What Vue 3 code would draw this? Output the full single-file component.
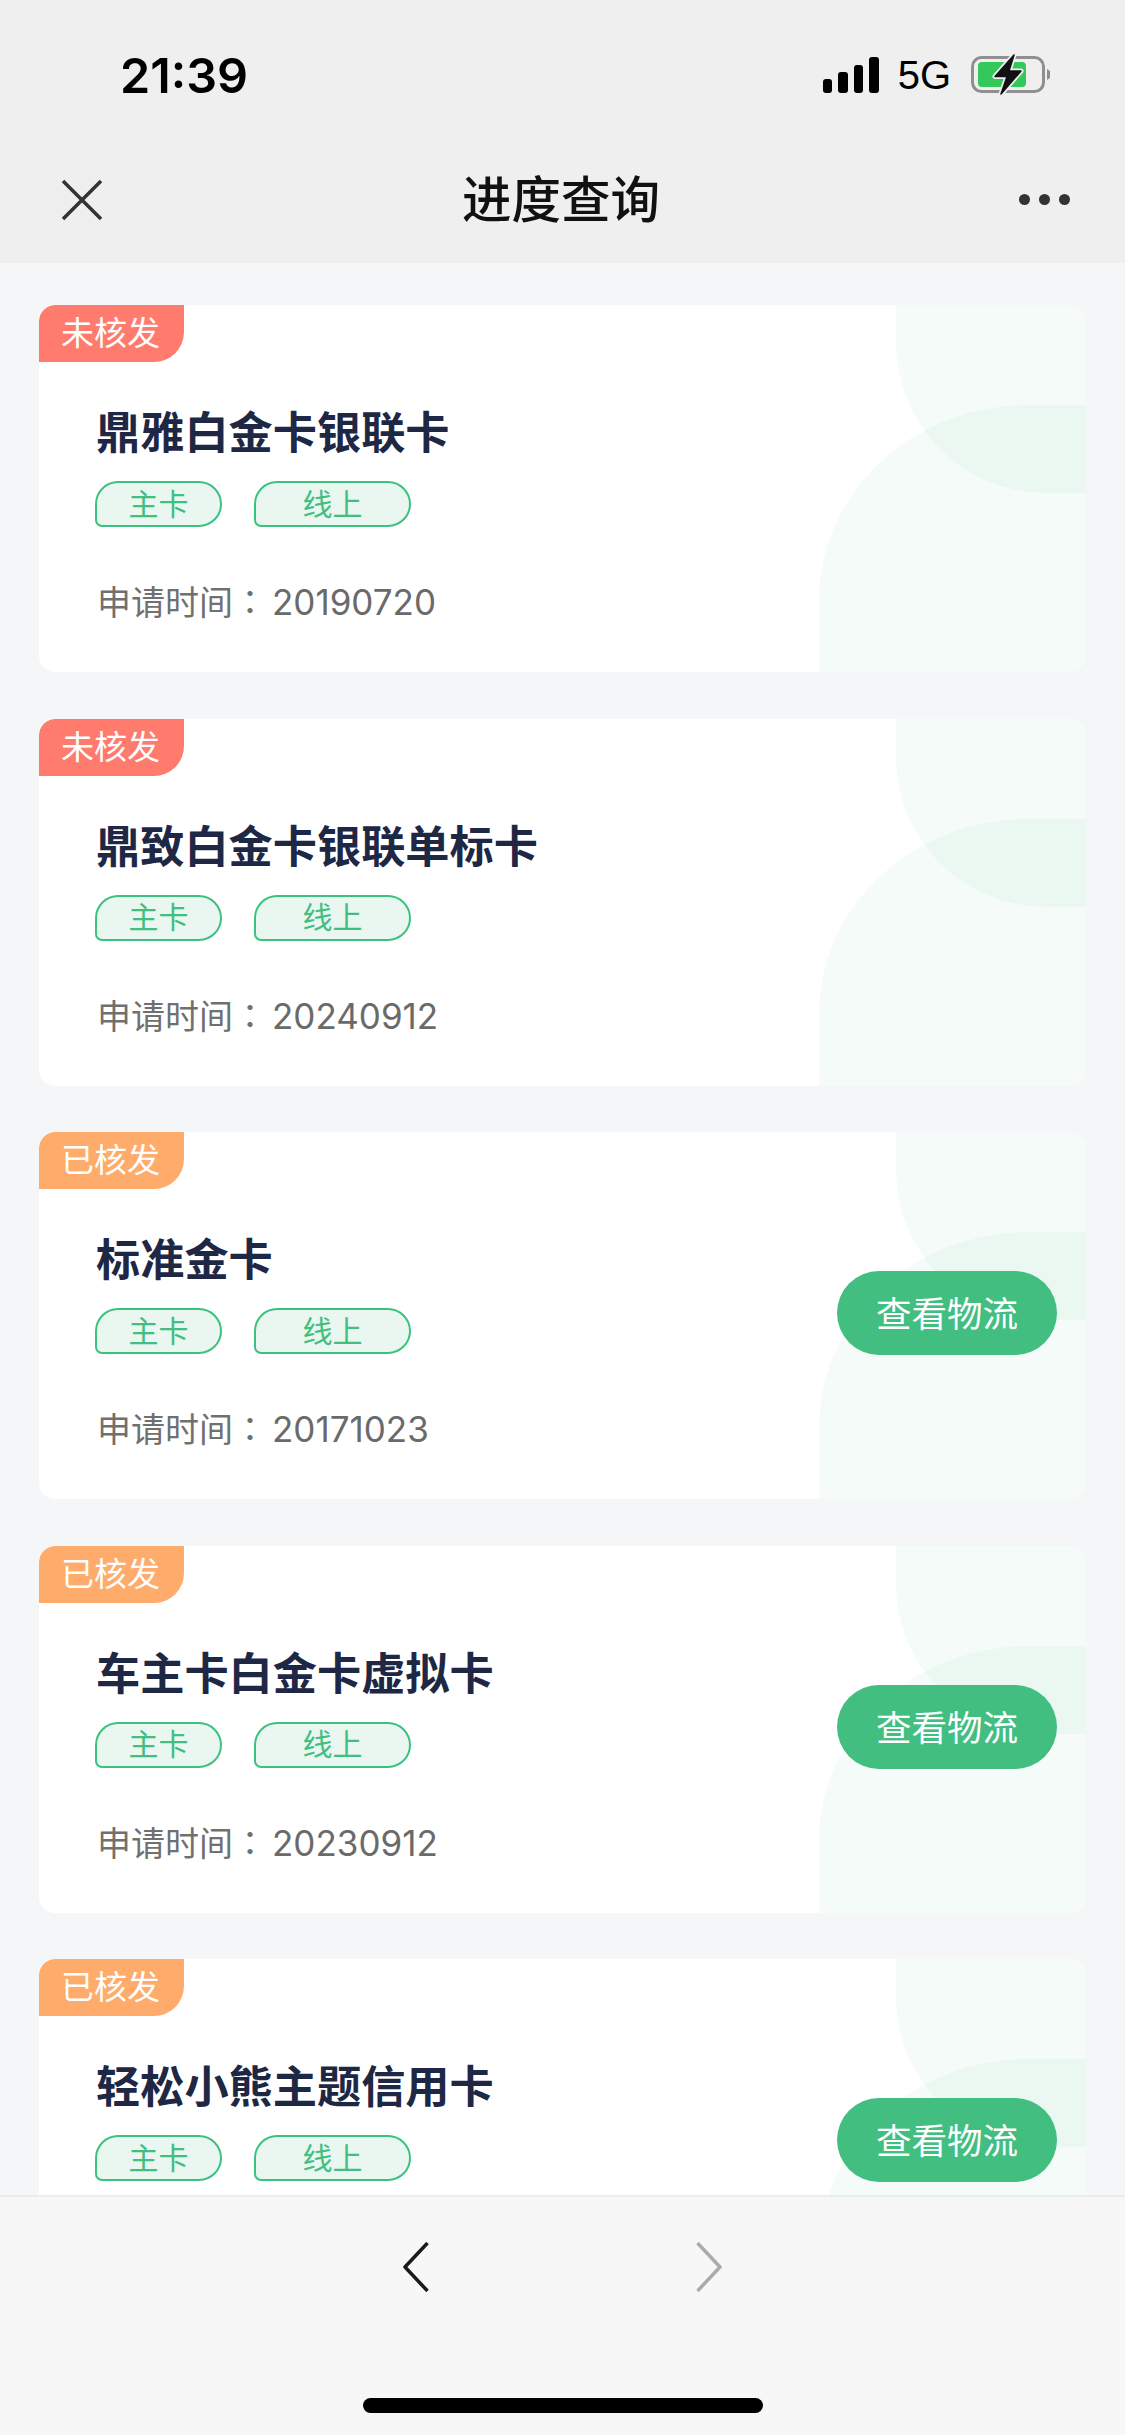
<template>
  <div class="page">
    <header class="top">
      <div class="status">
        <span class="time">21:39</span>
        <div class="status-right">
          <svg class="signal" width="56" height="36" viewBox="0 0 56 36">
            <rect x="0" y="22" width="9" height="14" rx="3" />
            <rect x="15" y="15" width="10" height="21" rx="3" />
            <rect x="31" y="8" width="9" height="28" rx="3" />
            <rect x="46" y="0" width="10" height="36" rx="3" />
          </svg>
          <span class="net">5G</span>
          <svg class="battery" width="80" height="42" viewBox="0 0 80 42">
            <rect x="1.500" y="3.500" width="71" height="34" rx="9" fill="none" stroke="#8f8f8f" stroke-width="3" />
            <rect x="7" y="8" width="48" height="25" rx="4" fill="#34c759" />
            <path d="M76 15l3 2v7l-3 2z" fill="#8f8f8f" />
            <path d="M43 1 24 22.500h12L30 40l20-23H38z" fill="#111" stroke="#efefef" stroke-width="5" stroke-linejoin="round" />
            <path d="M43 1 24 22.500h12L30 40l20-23H38z" fill="#111" stroke="#111" stroke-width="1.500" stroke-linejoin="round" />
          </svg>
        </div>
      </div>
      <nav class="nav">
        <div class="nav-side">
          <svg width="42" height="42" viewBox="0 0 42 42" fill="none" stroke="#333" stroke-width="3.5">
            <path d="M2 2l38 38M40 2 2 40" />
          </svg>
        </div>
        <h1 class="nav-title">进度查询</h1>
        <div class="nav-side nav-side-right">
          <i class="dot"></i><i class="dot"></i><i class="dot"></i>
        </div>
      </nav>
    </header>

    <main class="list">
      <section v-for="card in cards" :key="card.name" class="card">
        <div class="shape shape-top"></div>
        <div class="shape shape-bottom"></div>
        <span class="state" :class="{ done: card.issued }">{{ card.issued ? '已核发' : '未核发' }}</span>
        <div class="info">
          <h2 class="name">{{ card.name }}</h2>
          <div class="pills">
            <span class="pill pill-main">主卡</span>
            <span class="pill pill-line">线上</span>
          </div>
          <p v-if="card.date" class="date"><span class="date-label">申请时间：</span>{{ card.date }}</p>
        </div>
        <button v-if="card.issued" class="track">查看物流</button>
      </section>
    </main>

    <footer class="bottom">
      <div class="arrows">
        <svg width="26" height="50" viewBox="0 0 26 50" fill="none" stroke="#1a1a1a" stroke-width="3.5" stroke-linejoin="round">
          <path d="M24.500 1 2 25l22.500 24" />
        </svg>
        <svg width="26" height="50" viewBox="0 0 26 50" fill="none" stroke="#ababab" stroke-width="3.5" stroke-linejoin="round">
          <path d="M1.500 1 24 25 1.500 49" />
        </svg>
      </div>
      <div class="home"></div>
    </footer>
  </div>
</template>

<script setup>
const cards = [
  { name: '鼎雅白金卡银联卡', date: '20190720', issued: false },
  { name: '鼎致白金卡银联单标卡', date: '20240912', issued: false },
  { name: '标准金卡', date: '20171023', issued: true },
  { name: '车主卡白金卡虚拟卡', date: '20230912', issued: true },
  { name: '轻松小熊主题信用卡', date: '', issued: true }
]
</script>

<style>
html,
body {
  margin: 0;
  padding: 0;
}
</style>

<style scoped>
.page {
  width: 1125px;
  height: 2435px;
  display: flex;
  flex-direction: column;
  overflow: hidden;
  background: #f5f6f8;
  font-family: "Noto Sans CJK SC", "Noto Sans", sans-serif;
}
.top {
  height: 263px;
  flex-shrink: 0;
  background: #efefef;
}
.status {
  height: 150px;
  box-sizing: border-box;
  padding: 0 74px 0 120px;
  display: flex;
  align-items: center;
  justify-content: space-between;
}
.time {
  font-family: Inter, "Liberation Sans", sans-serif;
  font-size: 48.500px;
  font-weight: 600;
  color: #000;
}
.status-right {
  display: flex;
  align-items: center;
}
.signal {
  fill: #000;
  margin-top: -1px;
}
.net {
  margin-left: 19px;
  font-family: "Liberation Sans", sans-serif;
  font-size: 40px;
  color: #000;
}
.battery {
  margin-left: 20px;
}
.nav {
  height: 113px;
  box-sizing: border-box;
  padding: 0 55px 14px 61px;
  display: flex;
  align-items: center;
}
.nav-side {
  width: 60px;
  display: flex;
  align-items: center;
}
.nav-side-right {
  width: 69px;
  justify-content: flex-end;
  gap: 9px;
}
.dot {
  width: 11px;
  height: 11px;
  border-radius: 50%;
  background: #333;
}
.nav-title {
  flex: 1;
  margin: -6px 0 0;
  text-align: center;
  font-size: 49.500px;
  font-weight: 500;
  color: #111;
}
.list {
  flex: 1;
  min-height: 0;
  overflow: hidden;
  padding: 42px 39px 0;
  display: flex;
  flex-direction: column;
  gap: 46.500px;
}
.card {
  position: relative;
  height: 367px;
  flex-shrink: 0;
  display: flex;
  align-items: center;
  overflow: hidden;
  border-radius: 16px;
  background: #fff;
}
.shape {
  position: absolute;
  right: 0;
  background: rgba(66, 190, 128, 0.055);
}
.shape-top {
  top: 0;
  width: 190px;
  height: 188px;
  border-bottom-left-radius: 150px;
}
.shape-bottom {
  top: 100px;
  bottom: 0;
  width: 267px;
  border-top-left-radius: 210px 195px;
}
.state {
  position: absolute;
  top: 0;
  left: 0;
  width: 145px;
  height: 57px;
  padding-right: 2px;
  box-sizing: border-box;
  line-height: 53px;
  text-align: center;
  font-size: 33px;
  color: #fff;
  background: #ff7b6e;
  border-top-left-radius: 16px;
  border-bottom-right-radius: 30px;
}
.state.done {
  background: #ffab6b;
}
.info {
  position: relative;
  flex: 1;
  align-self: flex-start;
  padding: 95px 0 0 57px;
}
.name {
  margin: 0;
  font-size: 44.200px;
  line-height: 60px;
  font-weight: 700;
  color: #1e2845;
}
.pills {
  display: flex;
  gap: 32px;
  margin: 21px 0 0 -1px;
}
.pill {
  height: 46px;
  box-sizing: border-box;
  padding-bottom: 5px;
  display: flex;
  align-items: center;
  justify-content: center;
  border: 2px solid #3cc27f;
  border-radius: 23px 23px 23px 7px;
  background: #eaf7f1;
  font-size: 30px;
  color: #42be80;
}
.pill-main {
  width: 127px;
}
.pill-line {
  width: 157px;
}
.date {
  margin: 49px 0 0 1px;
  line-height: 50px;
  font-family: Inter, "Liberation Sans", "Noto Sans CJK SC", sans-serif;
  font-size: 35px;
  color: #6a6a6a;
}
.date-label {
  margin-right: 5px;
  font-family: "Noto Sans CJK TC", sans-serif;
  font-size: 34px;
  color: #707070;
}
.track {
  position: relative;
  flex-shrink: 0;
  width: 220px;
  height: 84px;
  margin: 0 29px 5px 0;
  padding: 0 0 3px;
  border: none;
  border-radius: 42px;
  background: #42be80;
  font-family: inherit;
  font-size: 35.500px;
  color: #fff;
}
.bottom {
  height: 240px;
  flex-shrink: 0;
  box-sizing: border-box;
  border-top: 2px solid #ececec;
  background: #f7f7f7;
}
.arrows {
  display: flex;
  justify-content: center;
  gap: 267px;
  padding-top: 45px;
}
.arrows svg {
  display: block;
}
.home {
  width: 400px;
  height: 15px;
  margin: 106px auto 0;
  border-radius: 8px;
  background: #000;
}
</style>
